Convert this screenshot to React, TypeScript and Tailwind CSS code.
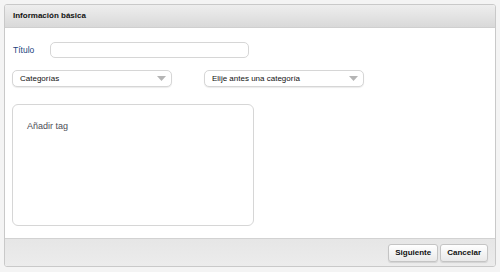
function Caret() {
    return (
        <svg width="9" height="5" viewBox="0 0 9 5" className="shrink-0">
            <path d="M0 0 L9 0 L4.5 5 Z" fill="#b5b5b5" />
        </svg>
    );
}

function SelectBox({ label }: { label: string }) {
    return (
        <div className="h-[17px] w-[160px] flex items-center justify-between pl-[7px] pr-[5px] bg-white border border-[#d6d6d6] rounded-[5px] shadow-[0_1px_1px_rgba(0,0,0,0.08)]">
            <span className="text-[8px] text-[#111]">{label}</span>
            <Caret />
        </div>
    );
}

export default function App() {
    return (
        <div className="w-[500px] h-[272px] bg-[#f4f4f4] pt-[4px] pl-[4px] pr-[4px] pb-[5px] font-['Liberation_Sans',Arial,sans-serif]">
            <div className="h-full flex flex-col border border-[#c9c9c9] rounded-[3px] bg-white overflow-hidden">
                {/* Header */}
                <div className="h-[23px] flex items-center px-[8px] bg-gradient-to-b from-[#eeeeee] to-[#d9d9d9] border-b border-[#cfcfcf]">
                    <span className="text-[8px] font-bold text-[#111]">Información básica</span>
                </div>

                {/* Body */}
                <div className="flex-1 flex flex-col px-[7px] pt-[14px]">
                    <div className="flex items-center h-[16px]">
                        <span className="w-[38px] pl-[1px] text-[8.5px] text-[#1a3f7e]">Título</span>
                        <div className="h-[16px] w-[199px] border border-[#d6d6d6] rounded-[5px] bg-white" />
                    </div>
                    <div className="flex items-center mt-[12px] gap-[32px]">
                        <SelectBox label="Categorías" />
                        <SelectBox label="Elije antes una categoría" />
                    </div>
                    <div className="mt-[17px] w-[242px] h-[122px] border border-[#d6d6d6] rounded-[6px] bg-white px-[14px] pt-[7px]">
                        <span className="text-[9px] text-[#4d4d55]">Añadir tag</span>
                    </div>
                </div>

                {/* Footer */}
                <div className="h-[28px] flex items-center justify-end gap-[2px] pr-[7px] bg-gradient-to-b from-[#e6e6e6] to-[#ececec] border-t border-[#d2d2d2]">
                    <button className="h-[18px] px-[6px] text-[8px] font-bold text-[#111] rounded-[3px] border border-[#c4c4c4] bg-gradient-to-b from-[#ffffff] to-[#e9e9e9] shadow-[0_1px_1px_rgba(0,0,0,0.1)]">
                        Siguiente
                    </button>
                    <button className="h-[18px] px-[6px] text-[8px] font-bold text-[#111] rounded-[3px] border border-[#c4c4c4] bg-gradient-to-b from-[#ffffff] to-[#e9e9e9] shadow-[0_1px_1px_rgba(0,0,0,0.1)]">
                        Cancelar
                    </button>
                </div>
            </div>
        </div>
    );
}
